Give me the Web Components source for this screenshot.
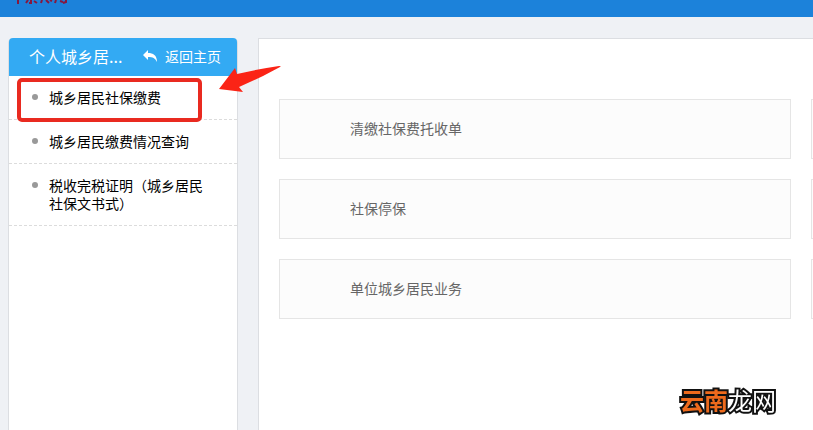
<!DOCTYPE html>
<html lang="zh-CN">
<head>
<meta charset="utf-8">
<meta name="viewport" content="width=device-width, initial-scale=1">
<title>个人城乡居民社保</title>
<style>
    body {
        margin: 0;
        background: #eff1f5;
        font: 14px/18px "Noto Sans CJK SC", sans-serif;
        color: #000;
        overflow: hidden;
    }
</style>
</head>
<body>
<app-shell>
    <top-bar slot="top"></top-bar>
    <side-menu slot="side" label="个人城乡居..." back="返回主页">
        <menu-entry marked>城乡居民社保缴费</menu-entry>
        <menu-entry>城乡居民缴费情况查询</menu-entry>
        <menu-entry>税收完税证明（城乡居民社保文书式）</menu-entry>
    </side-menu>
    <service-tile>清缴社保费托收单</service-tile>
    <service-tile></service-tile>
    <service-tile>社保停保</service-tile>
    <service-tile></service-tile>
    <service-tile>单位城乡居民业务</service-tile>
    <service-tile></service-tile>
    <site-mark slot="mark"><span slot="accent">云南</span>龙网</site-mark>
</app-shell>

<script>
const shellTemplate = document.createElement('template');
shellTemplate.innerHTML = `
    <style>
        :host {
            display: flex;
            flex-direction: column;
            height: 100vh;
            overflow: hidden;
        }
        .body {
            flex: 1;
            display: grid;
            grid-template-columns: 230px minmax(0, 1fr);
            gap: 20px;
            padding: 21px 0 0 8px;
        }
        main {
            background: #fff;
            border: 1px solid #dcdee2;
            border-width: 1px 0 0 1px;
            padding: 60px 0 20px 20px;
            overflow: hidden;
        }
        .tiles {
            display: grid;
            grid-template-columns: calc(100% - 22px) 512px;
            gap: 20px;
        }
    </style>
    <slot name="top"></slot>
    <div class="body">
        <slot name="side"></slot>
        <main><div class="tiles"><slot></slot></div></main>
    </div>
    <slot name="mark"></slot>
`;

class AppShell extends HTMLElement {
    constructor() {
        super();

        this.attachShadow({mode: 'open'});
        this.shadowRoot.appendChild(shellTemplate.content.cloneNode(true));
    }
}

const topTemplate = document.createElement('template');
topTemplate.innerHTML = `
    <style>
        :host {
            display: flex;
            align-items: flex-start;
            height: 17px;
            box-sizing: border-box;
            padding: 0 14px;
            background: #1c82da;
        }
    </style>
    <svg width="56" height="6" viewBox="0 0 56 6" aria-hidden="true">
        <path fill="none" stroke="#86183f" stroke-width="2" d="M4 0v4M14 0l-2 3M17 0v3l-2 0M20 1l3 2M28 0l-1 3M32 0l3 3M36 0l2 1M42 0l-1 3M46 1l3 1M52 0v2l-3 1"/>
    </svg>
`;

class TopBar extends HTMLElement {
    constructor() {
        super();

        this.attachShadow({mode: 'open'});
        this.shadowRoot.appendChild(topTemplate.content.cloneNode(true));
    }
}

const sideTemplate = document.createElement('template');
sideTemplate.innerHTML = `
    <style>
        :host {
            display: block;
            position: relative;
            box-sizing: border-box;
            background: #fff;
            border: 1px solid #dcdee2;
            border-width: 0 1px;
            border-radius: 5px 5px 0 0;
        }
        header {
            display: flex;
            align-items: center;
            justify-content: space-between;
            height: 38px;
            box-sizing: border-box;
            padding: 0 16px 2px 20px;
            background: #33aaf3;
            color: #fff;
            border-radius: 4px 4px 0 0;
        }
        h2 {
            margin: 0;
            font-size: 16px;
            font-weight: 400;
            line-height: 24px;
            white-space: nowrap;
        }
        a {
            display: flex;
            align-items: center;
            gap: 8px;
            color: inherit;
            text-decoration: none;
        }
        ul {
            margin: 0;
            padding: 0;
        }
        .arrow {
            position: absolute;
            left: 209px;
            top: 27px;
        }
    </style>
    <header>
        <h2></h2>
        <a href="#">
            <svg width="14" height="12" viewBox="0 0 14 12" aria-hidden="true">
                <path fill="#fff" d="M5 0v3c5 0 9 2 9 9-2-4-4-5-9-5v3L0 5z"/>
            </svg>
            <span></span>
        </a>
    </header>
    <ul role="list"><slot></slot></ul>
    <svg class="arrow" width="66" height="30" viewBox="0 0 66 30" aria-hidden="true">
        <path fill="#fb2416" d="M1 24L17 3l2 6Q40 4 61 1q3 0 1 1L45 11 21 22l4 5z"/>
    </svg>
`;

class SideMenu extends HTMLElement {
    constructor() {
        super();

        this.attachShadow({mode: 'open'});
        this.shadowRoot.appendChild(sideTemplate.content.cloneNode(true));
        this.shadowRoot.querySelector('h2').textContent = this.getAttribute('label');
        this.shadowRoot.querySelector('a span').textContent = this.getAttribute('back');
    }
}

const entryTemplate = document.createElement('template');
entryTemplate.innerHTML = `
    <style>
        :host {
            display: block;
            position: relative;
            border-bottom: 1px dashed #dcdcdc;
        }
        a {
            display: flex;
            gap: 11px;
            padding: 12px 24px 13px 23px;
            color: #000;
            text-decoration: none;
        }
        a::before {
            content: "";
            flex: none;
            width: 6px;
            height: 6px;
            margin-top: 6px;
            border-radius: 50%;
            background: #999;
        }
        .ring {
            display: none;
        }
        :host([marked]) .ring {
            display: block;
            position: absolute;
            inset: 2px 35px -3px 8px;
            border: 4px solid #e92a20;
            border-radius: 5px;
            pointer-events: none;
        }
    </style>
    <a href="#"><span><slot></slot></span></a>
    <div class="ring"></div>
`;

class MenuEntry extends HTMLElement {
    constructor() {
        super();

        this.attachShadow({mode: 'open'});
        this.shadowRoot.appendChild(entryTemplate.content.cloneNode(true));
        this.setAttribute('role', 'listitem');
    }
}

const tileTemplate = document.createElement('template');
tileTemplate.innerHTML = `
    <style>
        :host {
            display: block;
        }
        a {
            display: flex;
            align-items: center;
            height: 60px;
            box-sizing: border-box;
            padding: 0 20px 2px 70px;
            border: 1px solid #e5e5e5;
            background: #fcfcfc;
            color: #666;
            text-decoration: none;
        }
    </style>
    <a href="#"><slot></slot></a>
`;

class ServiceTile extends HTMLElement {
    constructor() {
        super();

        this.attachShadow({mode: 'open'});
        this.shadowRoot.appendChild(tileTemplate.content.cloneNode(true));
    }
}

const markTemplate = document.createElement('template');
markTemplate.innerHTML = `
    <style>
        :host {
            position: fixed;
            right: 37px;
            bottom: 14px;
            font-size: 24px;
            font-weight: 400;
            line-height: 32px;
            color: #fff;
            -webkit-text-stroke: 4px #111;
            paint-order: stroke fill;
        }
        ::slotted(span) {
            color: #ee6a1c;
            font-weight: 700;
        }
    </style>
    <slot name="accent"></slot><slot></slot>
`;

class SiteMark extends HTMLElement {
    constructor() {
        super();

        this.attachShadow({mode: 'open'});
        this.shadowRoot.appendChild(markTemplate.content.cloneNode(true));
    }
}

window.customElements.define('app-shell', AppShell);
window.customElements.define('top-bar', TopBar);
window.customElements.define('side-menu', SideMenu);
window.customElements.define('menu-entry', MenuEntry);
window.customElements.define('service-tile', ServiceTile);
window.customElements.define('site-mark', SiteMark);
</script>
</body>
</html>
